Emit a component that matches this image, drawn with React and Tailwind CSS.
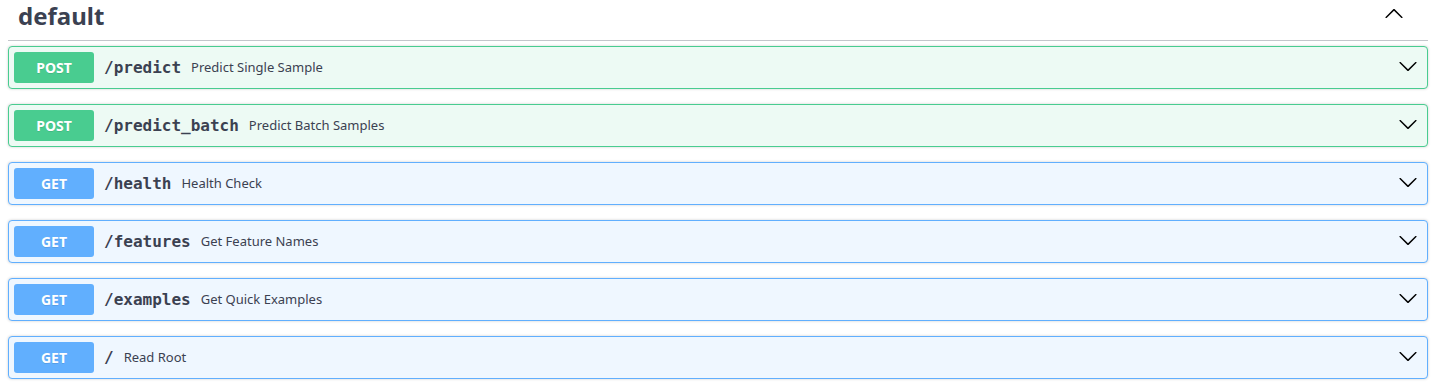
import React from 'react'

const ops = [
  { method: 'POST', path: '/predict', summary: 'Predict Single Sample' },
  { method: 'POST', path: '/predict_batch', summary: 'Predict Batch Samples' },
  { method: 'GET', path: '/health', summary: 'Health Check' },
  { method: 'GET', path: '/features', summary: 'Get Feature Names' },
  { method: 'GET', path: '/examples', summary: 'Get Quick Examples' },
  { method: 'GET', path: '/', summary: 'Read Root' },
]

const styles = {
  POST: {
    block: 'border-[#49cc90] bg-[#edfaf4]',
    badge: 'bg-[#49cc90]',
  },
  GET: {
    block: 'border-[#61affe] bg-[#eff7ff]',
    badge: 'bg-[#61affe]',
  },
}

function Arrow({ up }) {
  return (
    <svg width="20" height="20" viewBox="0 0 20 20" className={up ? 'rotate-180' : ''}>
      <path
        fill="#000"
        d="M17.418 6.109c.272-.268.709-.268.979 0s.271.701 0 .969l-7.908 7.83c-.27.268-.707.268-.979 0l-7.908-7.83c-.27-.268-.27-.701 0-.969.271-.268.709-.268.979 0L10 13.25l7.418-7.141z"
      />
    </svg>
  )
}

function OpBlock({ method, path, summary }) {
  const s = styles[method]
  return (
    <div className={`mb-[15px] rounded-[4px] border shadow-[0_0_3px_rgba(0,0,0,0.19)] ${s.block}`}>
      <div className="flex items-center p-[5px]">
        <span
          className={`flex h-[31px] w-[80px] items-center justify-center rounded-[3px] text-[14px] font-bold text-white [text-shadow:0_1px_0_rgba(0,0,0,0.1)] ${s.badge}`}
        >
          {method}
        </span>
        <span className="px-[10px] font-['DejaVu_Sans_Mono',monospace] text-[16px] font-bold text-[#3b4151]">
          {path}
        </span>
        <span className="flex-1 text-[13px] text-[#3b4151]">{summary}</span>
        <span className="mr-[4px] -mt-[4px] flex items-center">
          <Arrow />
        </span>
      </div>
    </div>
  )
}

export default function App() {
  return (
    <div className="min-h-screen bg-white pl-[8px] pr-[17px] font-['Noto_Sans',sans-serif] text-[#3b4151]">
      <div className="mb-[5px] flex h-[41px] items-center justify-between border-b border-[#c4c6cb] pl-[10px] pr-[24px]">
        <h3 className="-mt-[8px] text-[24px] font-bold leading-none">default</h3>
        <span className="-mt-[13px] flex">
          <Arrow up />
        </span>
      </div>
      {ops.map((op) => (
        <OpBlock key={op.path} {...op} />
      ))}
    </div>
  )
}
